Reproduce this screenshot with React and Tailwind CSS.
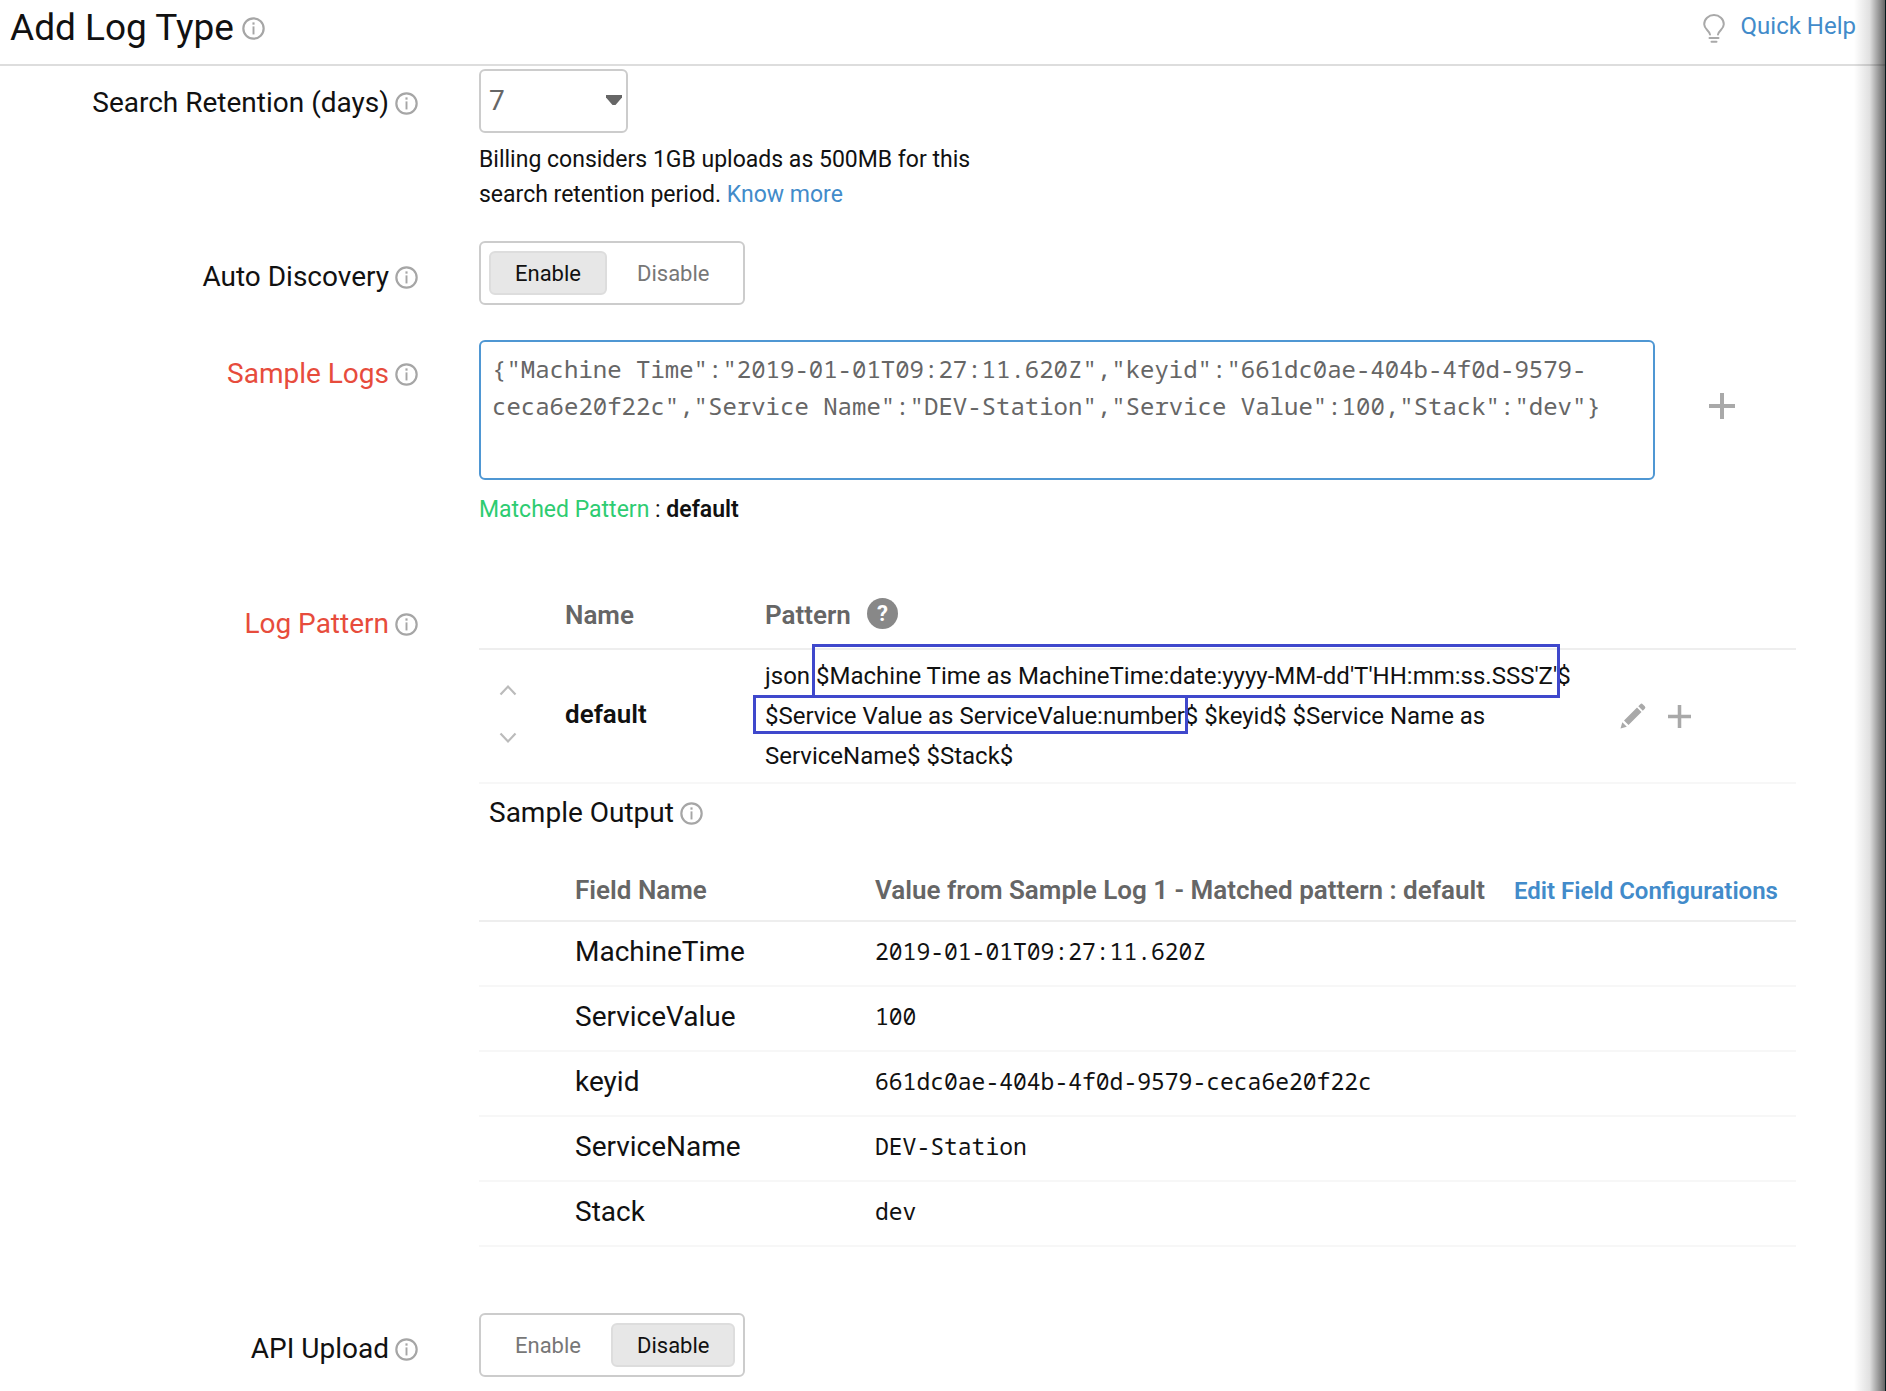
import { useState } from "react";

const outputRows = [
  { field: "MachineTime", value: "2019-01-01T09:27:11.620Z" },
  { field: "ServiceValue", value: "100" },
  { field: "keyid", value: "661dc0ae-404b-4f0d-9579-ceca6e20f22c" },
  { field: "ServiceName", value: "DEV-Station" },
  { field: "Stack", value: "dev" },
];

const sampleLog =
  '{"Machine Time":"2019-01-01T09:27:11.620Z","keyid":"661dc0ae-404b-4f0d-9579-ceca6e20f22c","Service Name":"DEV-Station","Service Value":100,"Stack":"dev"}';

function InfoIcon() {
  return (
    <svg viewBox="0 0 24 24" className="size-[23px] shrink-0 text-[#a6a6a6]" fill="none" stroke="currentColor">
      <circle cx="12" cy="12" r="10.6" strokeWidth="2.3" />
      <path d="M12 9.8v8.4" strokeWidth="2" />
      <path d="M12 5.6v2.4" strokeWidth="2.2" />
    </svg>
  );
}

function BulbIcon() {
  return (
    <svg viewBox="0 0 22 29" className="h-[29px] w-[22px] text-[#a9a9a9]" fill="none" stroke="currentColor" strokeWidth="2" strokeLinecap="round">
      <path d="M7 20.5C6.6 16.5 1.2 15.4 1.2 10.3a9.8 9.2 0 0 1 19.6 0C20.8 15.4 15.4 16.5 15 20.5" />
      <path d="M6.5 24h9M8.5 27.8h5" />
    </svg>
  );
}

function PlusIcon({ className }) {
  return (
    <svg viewBox="0 0 26 26" className={className} stroke="currentColor" strokeWidth="4">
      <path d="M13 0v26M0 13h26" />
    </svg>
  );
}

function PencilIcon() {
  return (
    <svg viewBox="0 0 26 26" className="size-[26px]" fill="currentColor">
      <path d="M0.5 25.5l1.8-6.3 4.5 4.5zM4 17.5L17 4.5l4.5 4.5-13 13zM18.3 3.2l2-2q1.2-1.2 2.4 0l2.1 2.1q1.2 1.2 0 2.4l-2 2z" />
    </svg>
  );
}

function FieldRow({ label, htmlFor, id, required, className = "", labelClass = "pt-[18px]", children }) {
  return (
    <div className={`grid grid-cols-[418px_minmax(0,1fr)] items-start gap-x-[61px] ${className}`}>
      <div className={`flex items-center justify-end gap-[6px] ${labelClass}`}>
        <label id={id} htmlFor={htmlFor} className={required ? "text-[28px] leading-9 text-[#e74c3c]" : "text-[28px] leading-9"}>
          {label}
        </label>
        <InfoIcon />
      </div>
      <div>{children}</div>
    </div>
  );
}

function Toggle({ labelledBy, initial }) {
  const [selected, setSelected] = useState(initial);

  return (
    <div role="group" aria-labelledby={labelledBy} className="inline-flex h-16 items-center gap-1 rounded-md border-2 border-[#ccc] px-2">
      {["Enable", "Disable"].map((option) => (
        <button
          key={option}
          type="button"
          aria-pressed={selected === option}
          onClick={() => setSelected(option)}
          className={
            selected === option
              ? "h-11 rounded-md border-2 border-[#ddd] bg-[#e7e7e7] px-6 text-[22px]"
              : "h-11 rounded-md border-2 border-transparent px-6 text-[22px] text-[#777]"
          }
        >
          {option}
        </button>
      ))}
    </div>
  );
}

// Text with a blue callout box drawn over it
function Highlight({ boxClass, children }) {
  return (
    <span className="relative whitespace-nowrap">
      {children}
      <span className={`pointer-events-none absolute border-3 border-[#3f48cc] ${boxClass}`} />
    </span>
  );
}

function PatternTable() {
  return (
    <table className="w-full table-fixed text-left">
      <thead>
        <tr className="h-[66px] border-b-2 border-[#eee] text-[26px] text-[#666]">
          <th className="w-[86px]" />
          <th className="w-[200px] font-semibold">Name</th>
          <th className="font-semibold">
            <span className="flex items-center gap-4">
              Pattern
              <button type="button" aria-label="Pattern help" className="mb-1 flex size-[31px] items-center justify-center rounded-full bg-[#888] text-[22px] leading-none font-bold text-white">
                ?
              </button>
            </span>
          </th>
          <th className="w-[176px]" />
        </tr>
      </thead>
      <tbody>
        <tr className="border-b-2 border-[#f7f7f7]">
          <td className="pb-1 pl-5">
            <div className="flex flex-col gap-9 text-[#bbb]">
              <button type="button" aria-label="Move up">
                <svg viewBox="0 0 18 12" className="h-3 w-[18px]" fill="none" stroke="currentColor" strokeWidth="2.2">
                  <path d="M1.5 10.5L9 2.5l7.5 8" />
                </svg>
              </button>
              <button type="button" aria-label="Move down">
                <svg viewBox="0 0 18 12" className="h-3 w-[18px]" fill="none" stroke="currentColor" strokeWidth="2.2">
                  <path d="M1.5 1.5L9 9.5l7.5-8" />
                </svg>
              </button>
            </div>
          </td>
          <td className="pb-1 text-[26px] font-semibold">default</td>
          <td className="py-[6px] text-[24px] leading-10">
            json <Highlight boxClass="-top-[18px] -right-[3px] -bottom-2 -left-1">$Machine Time as MachineTime:date:yyyy-MM-dd'T'HH:mm:ss.SSS'Z'</Highlight>${" "}
            <Highlight boxClass="-top-[7px] -right-[3px] -bottom-1 -left-3">$Service Value as ServiceValue:number</Highlight>$ $keyid$ $Service Name as ServiceName$ $Stack$
          </td>
          <td>
            <div className="flex items-center gap-[22px] text-[#a9a9a9]">
              <button type="button" aria-label="Edit pattern">
                <PencilIcon />
              </button>
              <button type="button" aria-label="Add pattern">
                <PlusIcon className="size-[23px]" />
              </button>
            </div>
          </td>
        </tr>
      </tbody>
    </table>
  );
}

function OutputTable() {
  return (
    <table className="w-full table-fixed text-left">
      <thead>
        <tr className="h-[64px] border-b-2 border-[#eee] text-[26px] text-[#666]">
          <th className="w-[396px] pt-1 pl-24 font-semibold">Field Name</th>
          <th className="pt-1 font-semibold">Value from Sample Log 1 - Matched pattern : default</th>
          <th className="w-[282px] pt-1 font-semibold">
            <a href="#fields" className="text-[24px] text-[#428bca]">Edit Field Configurations</a>
          </th>
        </tr>
      </thead>
      <tbody>
        {outputRows.map((row) => (
          <tr key={row.field} className="h-[65px] border-b-2 border-[#f7f7f7]">
            <td className="pb-1 pl-24 text-[28px]">{row.field}</td>
            <td colSpan={2} className="pb-1 font-['Noto_Sans_Mono','DejaVu_Sans_Mono',monospace] text-[23px]">{row.value}</td>
          </tr>
        ))}
      </tbody>
    </table>
  );
}

export default function App() {
  return (
    <div className="relative min-h-screen overflow-hidden bg-white font-[Roboto,sans-serif] text-[#111]">
      <header className="flex h-[66px] items-center justify-between border-b-2 border-[#ddd] pr-[30px] pb-2 pl-[10px]">
        <h1 className="flex items-center gap-2 text-[37px] leading-10">
          Add Log Type
          <InfoIcon />
        </h1>
        <a href="#help" className="flex items-start gap-4 text-[24px] leading-6 text-[#428bca]">
          <BulbIcon />
          Quick Help
        </a>
      </header>

      <main className="pt-[3px] pr-[90px] pb-3">
        <FieldRow label="Search Retention (days)" htmlFor="retention" labelClass="pt-4">
          <div className="relative w-[149px]">
            <select id="retention" defaultValue="7" className="h-16 w-full appearance-none rounded-md border-2 border-[#ccc] bg-white px-2 text-[28px] text-[#666]">
              <option>7</option>
              <option>15</option>
              <option>30</option>
            </select>
            <svg viewBox="0 0 16 10" className="pointer-events-none absolute top-[26px] right-[6px] h-[10px] w-4 fill-[#666]">
              <path d="M0 0h16v2.5L9.5 10h-3L0 2.5z" />
            </svg>
          </div>
          <p className="mt-[9px] w-[520px] text-[23px] leading-[35px]">
            Billing considers 1GB uploads as 500MB for this search retention period.{" "}
            <a href="#retention-info" className="text-[#428bca]">Know more</a>
          </p>
        </FieldRow>

        <FieldRow label="Auto Discovery" id="auto-discovery" className="mt-[29px]">
          <Toggle labelledBy="auto-discovery" initial="Enable" />
        </FieldRow>

        <FieldRow label="Sample Logs" htmlFor="sample-logs" required className="mt-[35px]" labelClass="pt-4">
          <div className="flex items-center">
            <textarea
              id="sample-logs"
              spellCheck={false}
              defaultValue={sampleLog}
              className="h-[140px] min-w-0 flex-1 resize-none rounded-md border-2 border-[#4f97d3] px-[11px] py-2 font-['Noto_Sans_Mono','DejaVu_Sans_Mono',monospace] text-[24px] leading-[37px] text-[#666]"
            />
            <button type="button" aria-label="Add sample log" className="mr-[61px] mb-2 ml-[54px] text-[#a9a9a9]">
              <PlusIcon className="size-[26px]" />
            </button>
          </div>
          <p className="mt-3 text-[23px] leading-[35px]">
            <span className="text-[#2ecc71]">Matched Pattern</span> : <span className="font-semibold">default</span>
          </p>
        </FieldRow>

        <FieldRow label="Log Pattern" id="log-pattern" required className="mt-[56px]" labelClass="pt-[23px]">
          <PatternTable />
          <h2 className="flex items-center gap-[6px] pt-[11px] pl-[10px] text-[28px] leading-9">
            Sample Output
            <InfoIcon />
          </h2>
          <div className="mt-[26px]">
            <OutputTable />
          </div>
        </FieldRow>

        <FieldRow label="API Upload" id="api-upload" className="mt-[66px]">
          <Toggle labelledBy="api-upload" initial="Disable" />
        </FieldRow>
      </main>

      <div className="pointer-events-none absolute inset-y-0 right-0 w-8 border-r border-[#04181c] bg-linear-to-r from-transparent via-black/12 via-50% to-black/60" />
    </div>
  );
}
